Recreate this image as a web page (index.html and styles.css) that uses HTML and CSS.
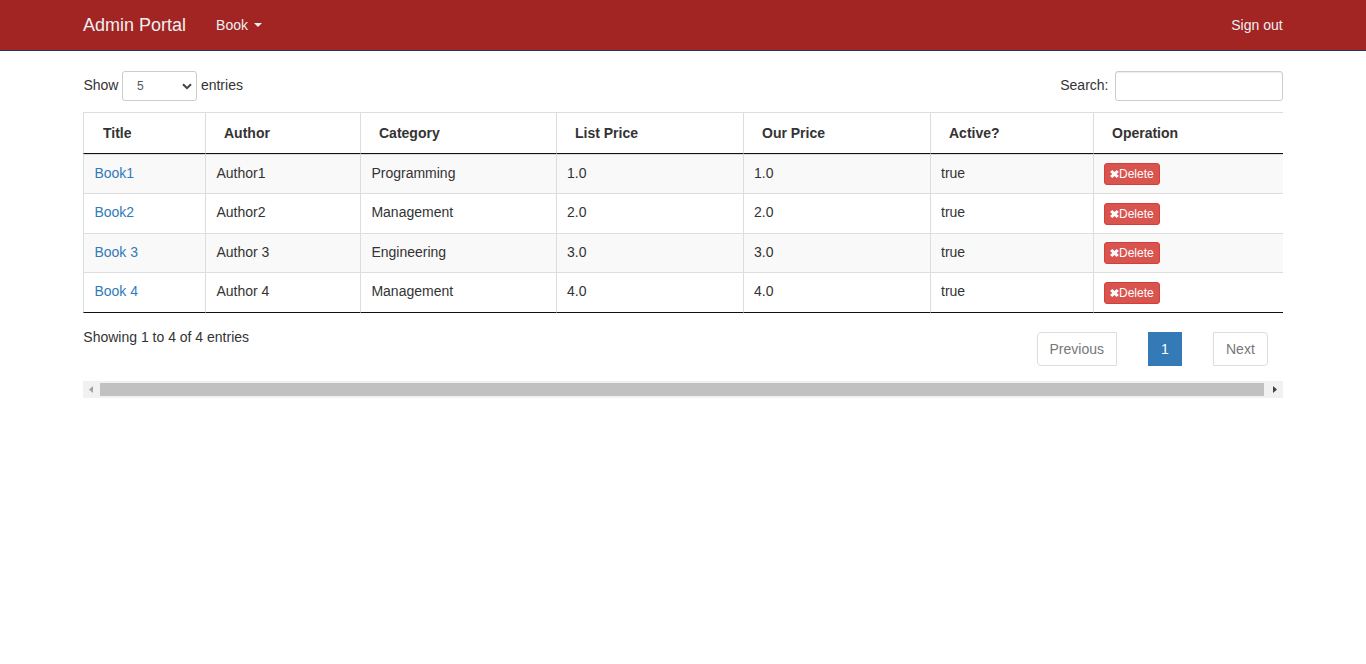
FILE: index.html
```html
<!DOCTYPE html>
<html lang="en">
<head>
<meta charset="utf-8">
<title>Admin Portal</title>
<link rel="stylesheet" href="styles.css">
</head>
<body>
<svg width="0" height="0" class="sprite"><defs>
<symbol id="remove" viewBox="0 0 9 10"><path d="M2.300 .9 4.500 3 6.700 .9 8.900 2.900 6.700 5 8.900 7.100 6.700 9.100 4.500 7 2.300 9.100 .1 7.100 2.300 5 .1 2.900Z" fill="#fff"/></symbol>
</defs></svg>
<nav class="navbar">
  <div class="container nav-inner">
    <a class="brand">Admin Portal</a>
    <a class="nav-link">Book <span class="caret"></span></a>
    <a class="nav-link sign-out">Sign out</a>
  </div>
</nav>
<main class="container">
  <div class="controls">
    <label class="length">Show <span class="select">5<svg width="10" height="7" viewBox="0 0 10 7"><path d="M1 1.200 5 5.200 9 1.200" fill="none" stroke="#444" stroke-width="2"/></svg></span> entries</label>
    <label class="search">Search:<input type="text" class="search-input"></label>
  </div>
  <table class="books">
    <colgroup><col class="c-title"><col class="c-author"><col class="c-category"><col class="c-price"><col class="c-price"><col class="c-active"><col class="c-op"></colgroup>
    <thead><tr><th>Title</th><th>Author</th><th>Category</th><th>List Price</th><th>Our Price</th><th>Active?</th><th>Operation</th></tr></thead>
    <tbody>
      <tr class="odd first"><td><a>Book1</a></td><td>Author1</td><td>Programming</td><td>1.0</td><td>1.0</td><td>true</td><td><button class="delete"><svg width="9" height="10"><use href="#remove"/></svg>Delete</button></td></tr>
      <tr class="low"><td><a>Book2</a></td><td>Author2</td><td>Management</td><td>2.0</td><td>2.0</td><td>true</td><td><button class="delete"><svg width="9" height="10"><use href="#remove"/></svg>Delete</button></td></tr>
      <tr class="odd short"><td><a>Book 3</a></td><td>Author 3</td><td>Engineering</td><td>3.0</td><td>3.0</td><td>true</td><td><button class="delete"><svg width="9" height="10"><use href="#remove"/></svg>Delete</button></td></tr>
      <tr class="low last"><td><a>Book 4</a></td><td>Author 4</td><td>Management</td><td>4.0</td><td>4.0</td><td>true</td><td><button class="delete"><svg width="9" height="10"><use href="#remove"/></svg>Delete</button></td></tr>
    </tbody>
  </table>
  <div class="footer">
    <div class="info">Showing 1 to 4 of 4 entries</div>
    <div class="pages"><a class="page prev">Previous</a><a class="page current">1</a><a class="page next">Next</a></div>
  </div>
  <div class="scrollbar">
    <svg width="17" height="17"><path d="M10 5v7L6 8.500Z" fill="#a3a3a3"/></svg>
    <div class="thumb"></div>
    <svg width="19" height="17"><path d="M9 5v7L13 8.500Z" fill="#404040"/></svg>
  </div>
</main>
</body>
</html>
```
FILE: styles.css
```css
* { box-sizing: border-box; }
body { margin: 0; background: #fff; color: #333; font: 14px/20px "Liberation Sans", Arial, sans-serif; }
.sprite { display: none; }
.container { width: 1200px; margin: 0 auto; }
.navbar { height: 51px; background: #a22423; border-bottom: 1px solid #27346b; }
.nav-inner { display: flex; align-items: center; height: 50px; color: #ecf0f1; }
.brand { font-size: 18px; margin-right: 30px; }
.nav-link { display: flex; align-items: center; }
.caret { margin-left: 6px; border-top: 4px solid #ecf0f1; border-left: 4px solid transparent; border-right: 4px solid transparent; }
.sign-out { margin-left: auto; margin-right: .4px; }
.controls { display: flex; justify-content: space-between; height: 61px; padding-top: 20px; }
.length, .search { display: flex; height: 30px; line-height: 28px; }
.length { padding-left: .4px; }
.select { display: flex; align-items: center; justify-content: space-between; width: 75px; height: 30px; margin: 0 4.300px 0 3.200px; padding: 0 4px 0 14.500px; border: 1px solid #ccc; border-radius: 3px; font-size: 12px; color: #555; }
.search-input { width: 168px; height: 30px; margin-left: 6.500px; border: 1px solid #ccc; border-radius: 3px; box-shadow: inset 0 1px 1px rgba(0,0,0,.075); }
.books { width: 1200px; table-layout: fixed; border-collapse: separate; border-spacing: 0; }
.c-title { width: 122px; }
.c-author { width: 155px; }
.c-category { width: 196px; }
.c-price { width: 187px; }
.c-active { width: 163px; }
.c-op { width: 190px; }
.books th { height: 42px; padding: 0 18px; text-align: left; border: solid #ddd; border-width: 1px 0 1px 1px; border-bottom-color: #111; }
.books th:first-child { padding-left: 19px; }
.books td { height: 40px; padding: 8px 10px 0; vertical-align: top; border: solid #ddd; border-width: 0 0 1px 1px; }
.books td:nth-child(-n+3) { padding-left: 10.400px; }
.books .first td { border-top-width: 1px; }
.books .short td { height: 39px; }
.books .last td { border-bottom-color: #111; }
.odd { background: #f9f9f9; }
.books a { color: #337ab7; }
.delete { display: flex; align-items: center; width: 56px; height: 22px; padding: 0 0 0 5px; border: 1px solid #d43f3a; border-radius: 3px; background: #d9534f; color: #fff; font: 12px/18px "Liberation Sans", Arial, sans-serif; }
.delete svg { flex: none; }
.low .delete { margin-top: 1px; }
.footer { display: flex; justify-content: space-between; height: 68px; }
.info { padding: 14px 0 0 .3px; }
.pages { display: flex; gap: 31px; padding: 19px 15px 0 0; }
.page { height: 34px; padding: 6px 12px; border: 1px solid #ddd; color: #777; }
.prev { width: 80px; padding-left: 11.500px; border-radius: 4px 0 0 4px; }
.current { width: 34px; background: #337ab7; border-color: #337ab7; color: #fff; }
.next { width: 55px; border-radius: 0 4px 4px 0; }
.scrollbar { display: flex; align-items: center; height: 17px; background: #f1f1f1; }
.thumb { flex: 1; height: 13px; background: #c1c1c1; }
```
